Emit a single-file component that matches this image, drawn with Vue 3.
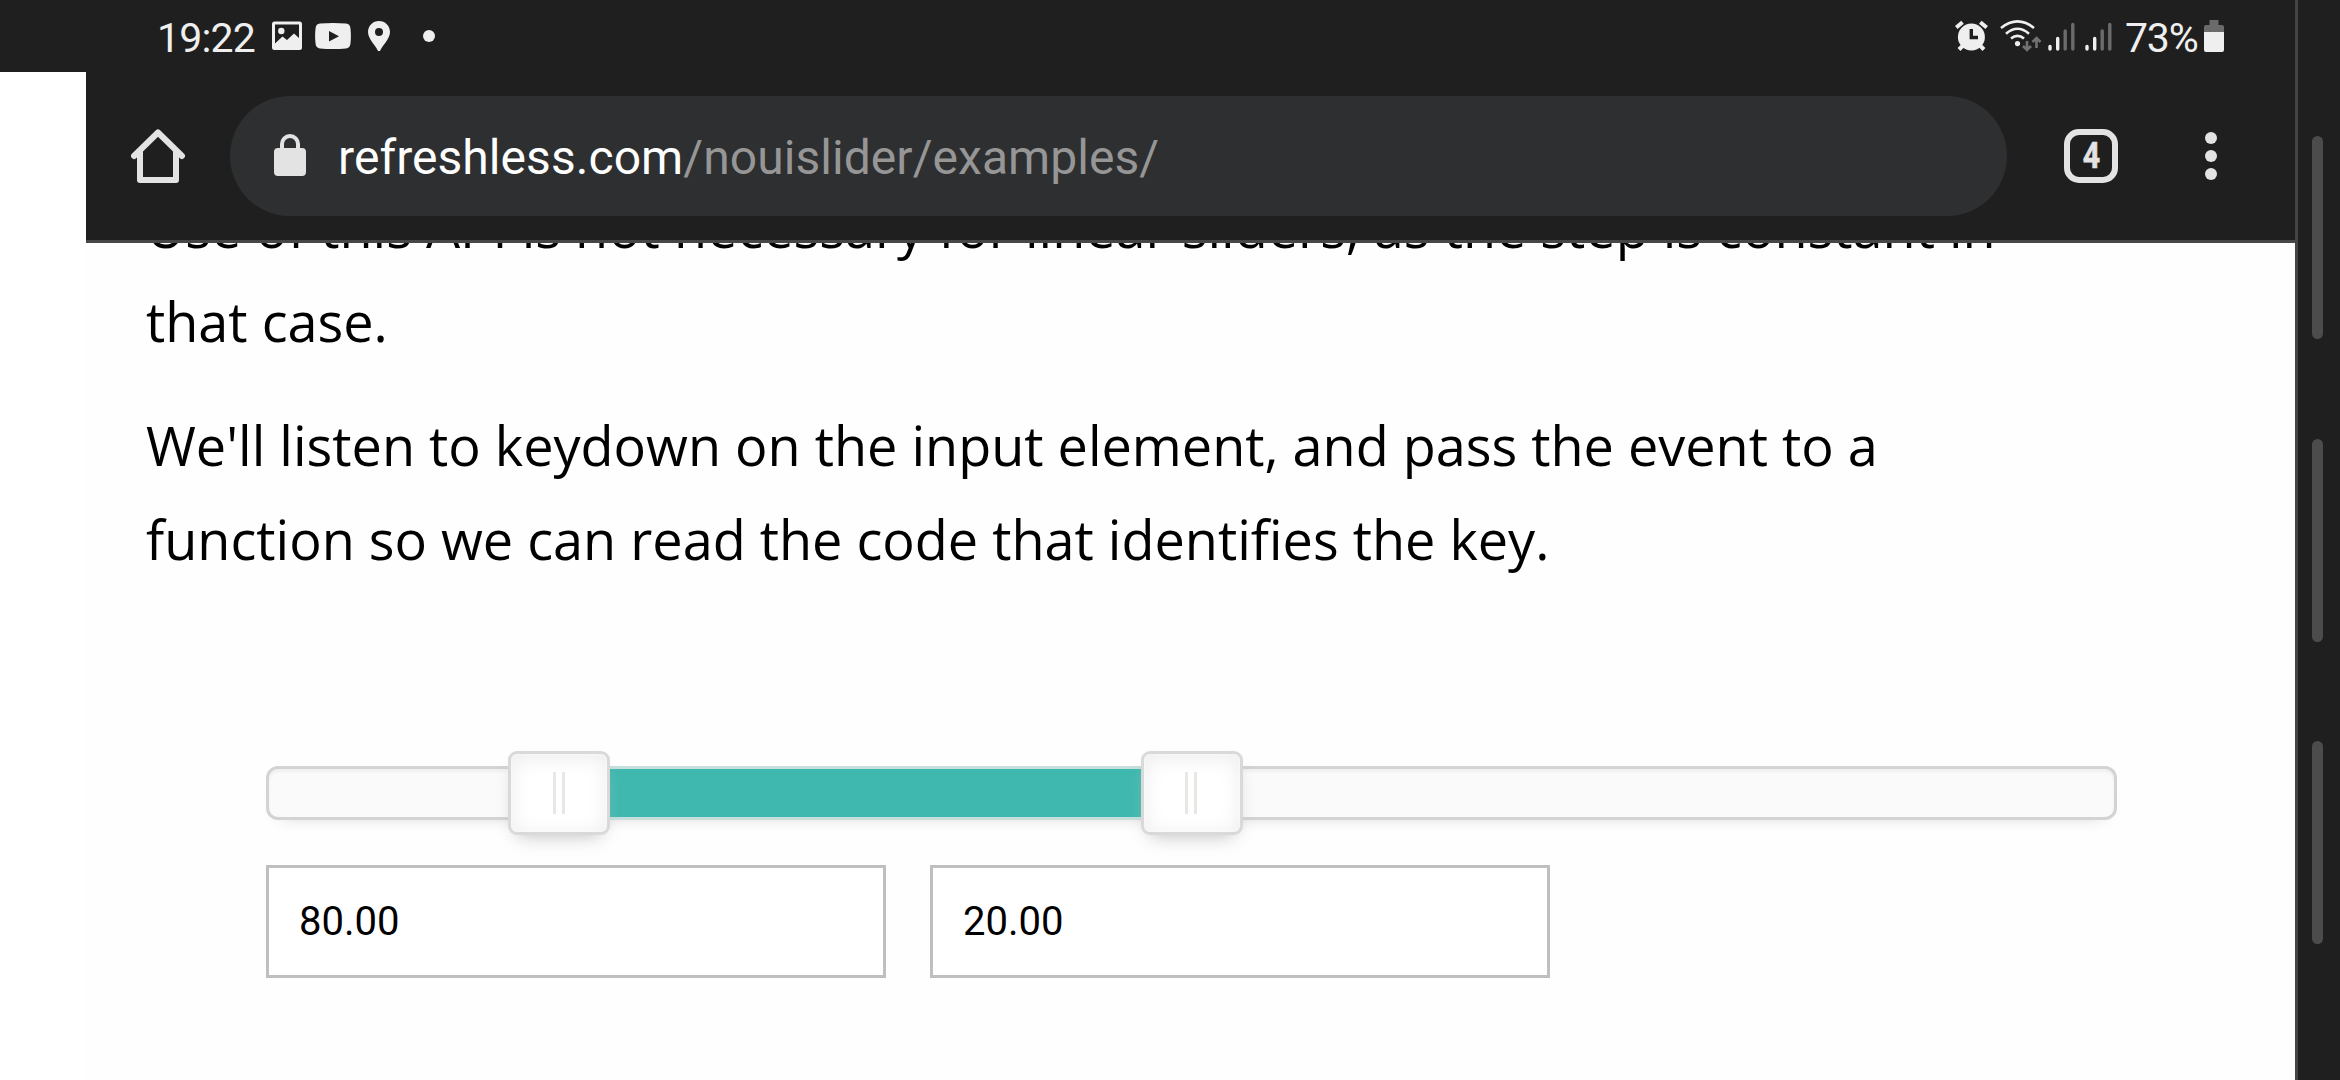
<script setup>
const navKeys = ['recents', 'home', 'back']
const signals = [1, 2]
const values = ['80.00', '20.00']
const paragraphs = [
  ['Use of this API is not necessary for linear sliders, as the step is constant in', 'that case.'],
  ["We'll listen to keydown on the input element, and pass the event to a", 'function so we can read the code that identifies the key.'],
]
</script>

<template>
  <div class="screen">
    <div class="main">
      <header class="status">
        <span class="clock">19:22</span>
        <svg class="picture" width="30" height="32" viewBox="0 0 30 32">
          <rect y="1.5" width="30" height="28.5" rx="2.5" fill="#efefef" />
          <path d="M3 4.5H27V18L22 13.5 15 20 10.5 16.5 3 23.5Z" fill="#1f1f1f" />
          <circle cx="9.3" cy="11" r="3.2" fill="#efefef" />
        </svg>
        <svg class="video" width="36" height="32" viewBox="0 0 36 32">
          <path d="M5 3.6Q18 2.4 31 3.6 35 4 35.4 8 36.4 16 35.4 24 35 28 31 28.4 18 29.6 5 28.4 1 28 .6 24-.4 16 .6 8 1 4 5 3.6Z" fill="#efefef" />
          <path d="M14 11V21.4L24 16.2Z" fill="#1f1f1f" />
        </svg>
        <svg class="pin" width="22" height="32" viewBox="0 0 22 32">
          <path fill-rule="evenodd" d="M11 1C4.900 1 0 5.900 0 12 0 19 7.500 25 10 31H12C14.500 25 22 19 22 12 22 5.900 17.100 1 11 1ZM11 8a4 4 0 1 1 0 8 4 4 0 0 1 0-8Z" fill="#efefef" />
        </svg>
        <i class="more"></i>
        <div class="indicators">
          <svg class="alarm" width="33" height="32" viewBox="0 0 33 32">
            <g stroke="#efefef" fill="none" stroke-width="4">
              <path d="M1.300 7.500 7.500 2.200M25.300 2.200 31.700 7.500" />
              <path d="M4 29.500 8 25.500M29 29.500 25 25.500" />
            </g>
            <circle cx="16.400" cy="17" r="13.500" fill="#efefef" />
            <path d="M16.300 9V17.500H23" stroke="#1f1f1f" stroke-width="3.400" fill="none" />
          </svg>
          <svg class="wifi" width="42" height="32" viewBox="0 0 42 32">
            <g fill="none" stroke="#efefef" stroke-width="2.600">
              <path d="M1 8Q17.500-5.300 34 8" />
              <path d="M6 13.700Q17.500 3.800 29 13.700" />
              <path d="M11 18.600Q17.500 13 24 18.600" />
            </g>
            <circle cx="17.500" cy="23.600" r="2.600" fill="#efefef" />
            <path d="M27 21V30M23 26 27 30 31 26M36.500 28V18M32.500 22 36.500 18 40.500 22" fill="none" stroke="#727272" stroke-width="2.600" />
          </svg>
          <svg v-for="s in signals" :key="s" class="signal" width="28" height="32" viewBox="0 0 28 32">
            <g stroke-width="3.400" stroke-linecap="round">
              <path d="M2 26.500V29M9.700 18.500V29" stroke="#efefef" />
              <path d="M17.200 11V29M24.800 4.500V29" stroke="#6b6b6b" />
            </g>
          </svg>
          <span class="percent">73%</span>
          <svg class="battery" width="20" height="32" viewBox="0 0 20 32">
            <path d="M5.500 0H14.500V5H18Q20 5 20 7V12H0V7Q0 5 2 5H5.500Z" fill="#6b6b6b" />
            <path d="M0 12H20V30Q20 32 18 32H2Q0 32 0 30Z" fill="#efefef" />
          </svg>
        </div>
      </header>

      <div class="browser">
        <div class="toolbar">
          <svg class="home" width="54" height="54" viewBox="0 0 54 54" fill="none" stroke="#e3e3e3" stroke-width="6" stroke-linejoin="round" stroke-linecap="round">
            <path d="M3 27 27 3.500 51 27" />
            <path d="M9 23V51H45V23" />
          </svg>
          <div class="omnibox">
            <svg class="lock" width="32" height="42" viewBox="0 0 32 42">
              <rect y="14" width="32" height="28" rx="4" fill="#e3e3e3" />
              <path d="M8 16V10a8 8 0 0 1 16 0V16" fill="none" stroke="#e3e3e3" stroke-width="4" />
            </svg>
            <span class="url">refreshless.com<span class="path">/nouislider/examples/</span></span>
          </div>
          <div class="tabs"><span>4</span></div>
          <div class="menu"><i></i><i></i><i></i></div>
        </div>

        <main class="page">
          <div class="copy">
            <p v-for="(lines, p) in paragraphs" :key="p">
              <span v-for="line in lines" :key="line" class="line">{{ line }}</span>
            </p>
          </div>
          <div class="example">
            <div class="slider">
              <div class="connect"></div>
              <div class="handle lower"><i></i><i></i></div>
              <div class="handle upper"><i></i><i></i></div>
            </div>
            <div class="inputs">
              <div v-for="v in values" :key="v" class="input" role="textbox">{{ v }}</div>
            </div>
          </div>
        </main>
      </div>
    </div>

    <nav class="navbar">
      <i v-for="k in navKeys" :key="k"></i>
    </nav>
  </div>
</template>

<style>
body {
  overflow: hidden;
}
</style>

<style scoped>
* {
  box-sizing: border-box;
}
.screen {
  display: flex;
  width: 2340px;
  height: 1080px;
  overflow: hidden;
  background: #fff;
  font-family: Roboto, sans-serif;
}
svg {
  display: block;
  flex: none;
}
.main {
  width: 2295px;
  display: flex;
  flex-direction: column;
}
.status {
  height: 72px;
  flex: none;
  display: flex;
  align-items: center;
  padding: 0 71px 0 157px;
  background: #1f1f1f;
  color: #efefef;
}
.clock,
.percent {
  font-size: 41px;
  line-height: 48px;
  padding-top: 3px;
  white-space: nowrap;
}
.clock {
  width: 115px;
  letter-spacing: -0.8px;
}
.video {
  margin-left: 13px;
}
.pin {
  margin-left: 17px;
}
.more {
  width: 12px;
  height: 12px;
  border-radius: 50%;
  margin-left: 33px;
  background: #efefef;
}
.indicators {
  display: flex;
  align-items: center;
  margin-left: auto;
}
.wifi {
  margin-left: 12px;
}
.signal {
  margin-left: 9px;
}
.wifi + .signal {
  margin-left: 6px;
}
.percent {
  width: 79px;
  margin-left: 12px;
  letter-spacing: -1.2px;
}
.browser {
  margin-left: 86px;
  flex: 1;
  min-height: 0;
  display: flex;
  flex-direction: column;
}
.toolbar {
  height: 171px;
  flex: none;
  display: flex;
  align-items: center;
  padding-left: 45px;
  background: #1f1f1f;
  border-bottom: 3px solid #474747;
}
.omnibox {
  width: 1777px;
  height: 120px;
  margin-left: 45px;
  border-radius: 60px;
  background: #2e2f31;
  display: flex;
  align-items: center;
  padding-left: 44px;
}
.lock {
  margin-top: -2px;
}
.url {
  margin-left: 32px;
  font-size: 48px;
  line-height: 56px;
  padding-top: 4px;
  letter-spacing: 0.06px;
  color: #fff;
  white-space: nowrap;
}
.path {
  color: #969696;
}
.tabs {
  width: 54px;
  height: 54px;
  margin-left: 57px;
  border: 6px solid #e3e3e3;
  border-radius: 15px;
  display: flex;
  align-items: center;
  justify-content: center;
  color: #e3e3e3;
  font-weight: 700;
  font-size: 36px;
  line-height: 42px;
}
.tabs span {
  transform: scaleX(0.84);
  -webkit-text-stroke: 0.6px #e3e3e3;
}
.menu {
  margin-left: 87px;
  display: flex;
  flex-direction: column;
  gap: 6px;
}
.menu i {
  width: 12px;
  height: 12px;
  border-radius: 50%;
  background: #e3e3e3;
}
.page {
  flex: 1;
  min-height: 0;
  overflow: hidden;
  background: #fefefe;
  color: #000;
}
.copy {
  margin-top: -63px;
  padding-left: 60px;
  font-family: "Open Sans", sans-serif;
  font-size: 54px;
  line-height: 94px;
}
.copy p {
  margin: 0 0 30px;
}
.line {
  display: block;
  white-space: nowrap;
}
.example {
  width: 1851px;
  margin: 180px 0 0 180px;
}
.slider {
  position: relative;
  height: 54px;
  border: 3px solid #d3d3d3;
  border-radius: 12px;
  background: #fafafa;
  box-shadow: inset 0 3px 3px #f0f0f0, 0 9px 18px -15px #bbb;
}
.connect {
  position: absolute;
  left: 290px;
  width: 633px;
  top: -3px;
  height: 54px;
  background: #3fb8af;
  border-top: 3px solid #c5dfdd;
  border-bottom: 3px solid #c5dfdd;
}
.handle {
  position: absolute;
  top: -18px;
  width: 102px;
  height: 84px;
  border: 3px solid #d9d9d9;
  border-radius: 9px;
  background: #fff;
  box-shadow: inset 0 0 3px #fff, inset 0 3px 21px #ebebeb, 0 9px 18px -9px #bbb;
  display: flex;
  gap: 6px;
  padding: 18px 0 0 42px;
}
.lower {
  left: 239px;
}
.upper {
  left: 872px;
}
.upper {
  padding-left: 41px;
}
.handle i {
  width: 3px;
  height: 42px;
  background: #e8e7e6;
}
.inputs {
  display: flex;
  gap: 44px;
  margin-top: 45px;
}
.input {
  width: 620px;
  height: 113px;
  border: 3px solid #bfbfbf;
  padding: 0 30px;
  font-size: 40px;
  line-height: 107px;
  background: #fff;
}
.navbar {
  width: 45px;
  border-left: 3px solid #444;
  background: #1f1f1f;
  padding: 136px 0 0 14px;
  display: flex;
  flex-direction: column;
  gap: 99.500px;
}
.navbar i {
  width: 11px;
  height: 203px;
  flex: none;
  border-radius: 6px;
  background: #4c4c4c;
}
</style>
